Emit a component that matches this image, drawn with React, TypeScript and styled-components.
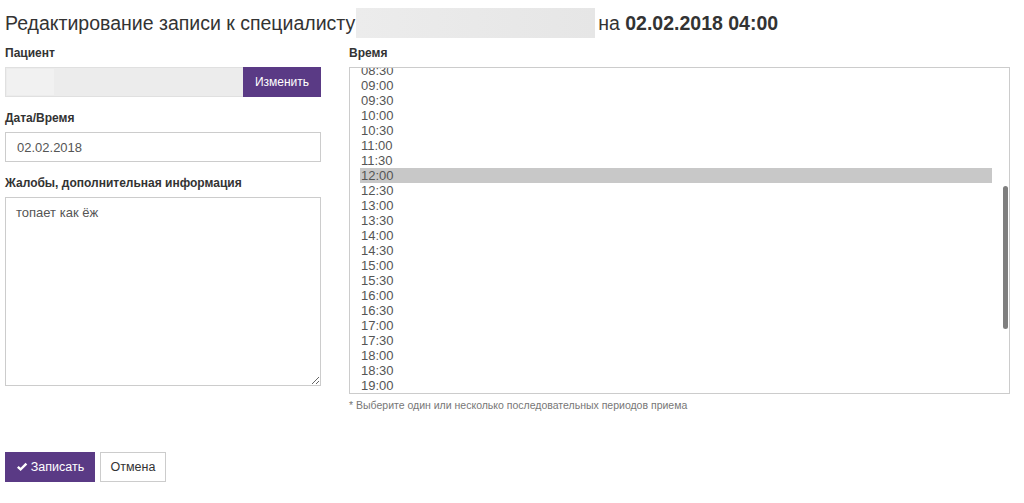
import React, { useEffect, useRef } from 'react';
import styled, { createGlobalStyle } from 'styled-components';

const GlobalStyle = createGlobalStyle`
  body {
    margin: 0;
    background: #fff;
    font-family: 'Liberation Sans', Arial, sans-serif;
    color: #333;
  }
`;

const slots: string[] = [];
for (let h = 0; h < 24; h++) {
  const hh = String(h).padStart(2, '0');
  slots.push(`${hh}:00`, `${hh}:30`);
}

const SCROLL_TOP = 260;
const VIEW_H = 325;
const CONTENT_H = slots.length * 15;

export default function App() {
  const listRef = useRef<HTMLDivElement>(null);

  useEffect(() => {
    if (listRef.current) listRef.current.scrollTop = SCROLL_TOP;
  }, []);

  const thumbH = (VIEW_H / CONTENT_H) * VIEW_H - 4;
  const thumbTop = (SCROLL_TOP / CONTENT_H) * VIEW_H + 1;

  return (
    <Page>
      <GlobalStyle />
      <Title>
        Редактирование записи к специалисту
        <Hidden />
        <span>на&nbsp;</span>
        <strong>02.02.2018 04:00</strong>
      </Title>

      <Columns>
        <LeftCol>
          <Field>
            <Label>Пациент</Label>
            <InputGroup>
              <ReadonlyInput>
                <HiddenName />
              </ReadonlyInput>
              <GroupButton>Изменить</GroupButton>
            </InputGroup>
          </Field>

          <Field>
            <Label>Дата/Время</Label>
            <TextInput defaultValue="02.02.2018" />
          </Field>

          <Field>
            <Label>Жалобы, дополнительная информация</Label>
            <TextArea defaultValue="топает как ёж" />
          </Field>
        </LeftCol>

        <RightCol>
          <Label>Время</Label>
          <ListBox>
            <SlotList ref={listRef}>
              {slots.map((s) => (
                <Slot key={s} selected={s === '12:00'}>
                  {s}
                </Slot>
              ))}
            </SlotList>
            <Thumb style={{ top: thumbTop, height: thumbH }} />
          </ListBox>
          <Hint>* Выберите один или несколько последовательных периодов приема</Hint>
        </RightCol>
      </Columns>

      <Actions>
        <PrimaryButton>
          <svg width="12" height="10" viewBox="0 0 13 11">
            <path d="M1 6.2 L2.8 4.3 L5 6.4 L10.4 0.8 L12.3 2.7 L5 10 Z" fill="#fff" />
          </svg>
          Записать
        </PrimaryButton>
        <DefaultButton>Отмена</DefaultButton>
      </Actions>
    </Page>
  );
}

const Page = styled.div`
  padding: 8px 14px 20px 5px;
`;

const Title = styled.h1`
  display: flex;
  align-items: center;
  height: 30px;
  margin: 0 0 8px;
  font-size: 19.5px;
  font-weight: normal;
  color: #333;
  white-space: nowrap;

  strong {
    font-weight: bold;
  }
`;

const Hidden = styled.span`
  display: inline-block;
  width: 239px;
  height: 30px;
  margin: 0 3px 0 1px;
  background: linear-gradient(90deg, #ececec, #e6e6e6);
`;

const Columns = styled.div`
  display: grid;
  grid-template-columns: 316px 1fr;
  column-gap: 28px;
  align-items: start;
`;

const LeftCol = styled.div`
  display: flex;
  flex-direction: column;
  gap: 14px;
`;

const RightCol = styled.div`
  display: flex;
  flex-direction: column;
`;

const Field = styled.div`
  display: flex;
  flex-direction: column;
`;

const Label = styled.label`
  font-size: 12px;
  font-weight: bold;
  line-height: 15px;
  margin-bottom: 6px;
  color: #333;
`;

const InputGroup = styled.div`
  display: flex;
  height: 30px;
`;

const ReadonlyInput = styled.div`
  flex: 1;
  box-sizing: border-box;
  background: #ececec;
  border: 1px solid #e0e0e0;
  border-right: none;
  padding: 1px 0 1px 1px;
`;

const HiddenName = styled.div`
  width: 47px;
  height: 100%;
  background: #f1f1f1;
`;

const GroupButton = styled.button`
  width: 78px;
  border: none;
  background: #5a3a85;
  color: #fff;
  font-family: inherit;
  font-size: 12px;
  padding: 0;
`;

const TextInput = styled.input`
  box-sizing: border-box;
  height: 30px;
  border: 1px solid #ccc;
  padding: 0 11px;
  font-family: inherit;
  font-size: 13px;
  color: #555;
  outline: none;
`;

const TextArea = styled.textarea`
  box-sizing: border-box;
  height: 189px;
  border: 1px solid #ccc;
  padding: 7px 10px;
  font-family: inherit;
  font-size: 13px;
  color: #555;
  outline: none;
  resize: vertical;
`;

const ListBox = styled.div`
  position: relative;
  height: 327px;
  box-sizing: border-box;
  border: 1px solid #ccc;
`;

const SlotList = styled.div`
  height: 100%;
  overflow: hidden;
  padding: 0 17px 0 10px;
`;

const Thumb = styled.div`
  position: absolute;
  right: 1px;
  width: 5px;
  border-radius: 3px;
  background: #7f7f7f;
`;

const Slot = styled.div<{ selected?: boolean }>`
  height: 15px;
  line-height: 15px;
  font-size: 13px;
  color: #555;
  padding-left: 1px;
  background: ${(p) => (p.selected ? '#c8c8c8' : 'transparent')};
`;

const Hint = styled.p`
  margin: 5px 0 0;
  font-size: 10.5px;
  color: #777;
`;

const Actions = styled.div`
  display: flex;
  gap: 5px;
  margin-top: 41px;
`;

const PrimaryButton = styled.button`
  display: flex;
  align-items: center;
  gap: 3px;
  height: 30px;
  width: 90px;
  justify-content: center;
  padding: 0;
  border: none;
  background: #5a3a85;
  color: #fff;
  font-family: inherit;
  font-size: 12.5px;
`;

const DefaultButton = styled.button`
  height: 30px;
  width: 66px;
  padding: 0;
  border: 1px solid #ccc;
  background: #fff;
  color: #333;
  font-family: inherit;
  font-size: 12.5px;
`;
